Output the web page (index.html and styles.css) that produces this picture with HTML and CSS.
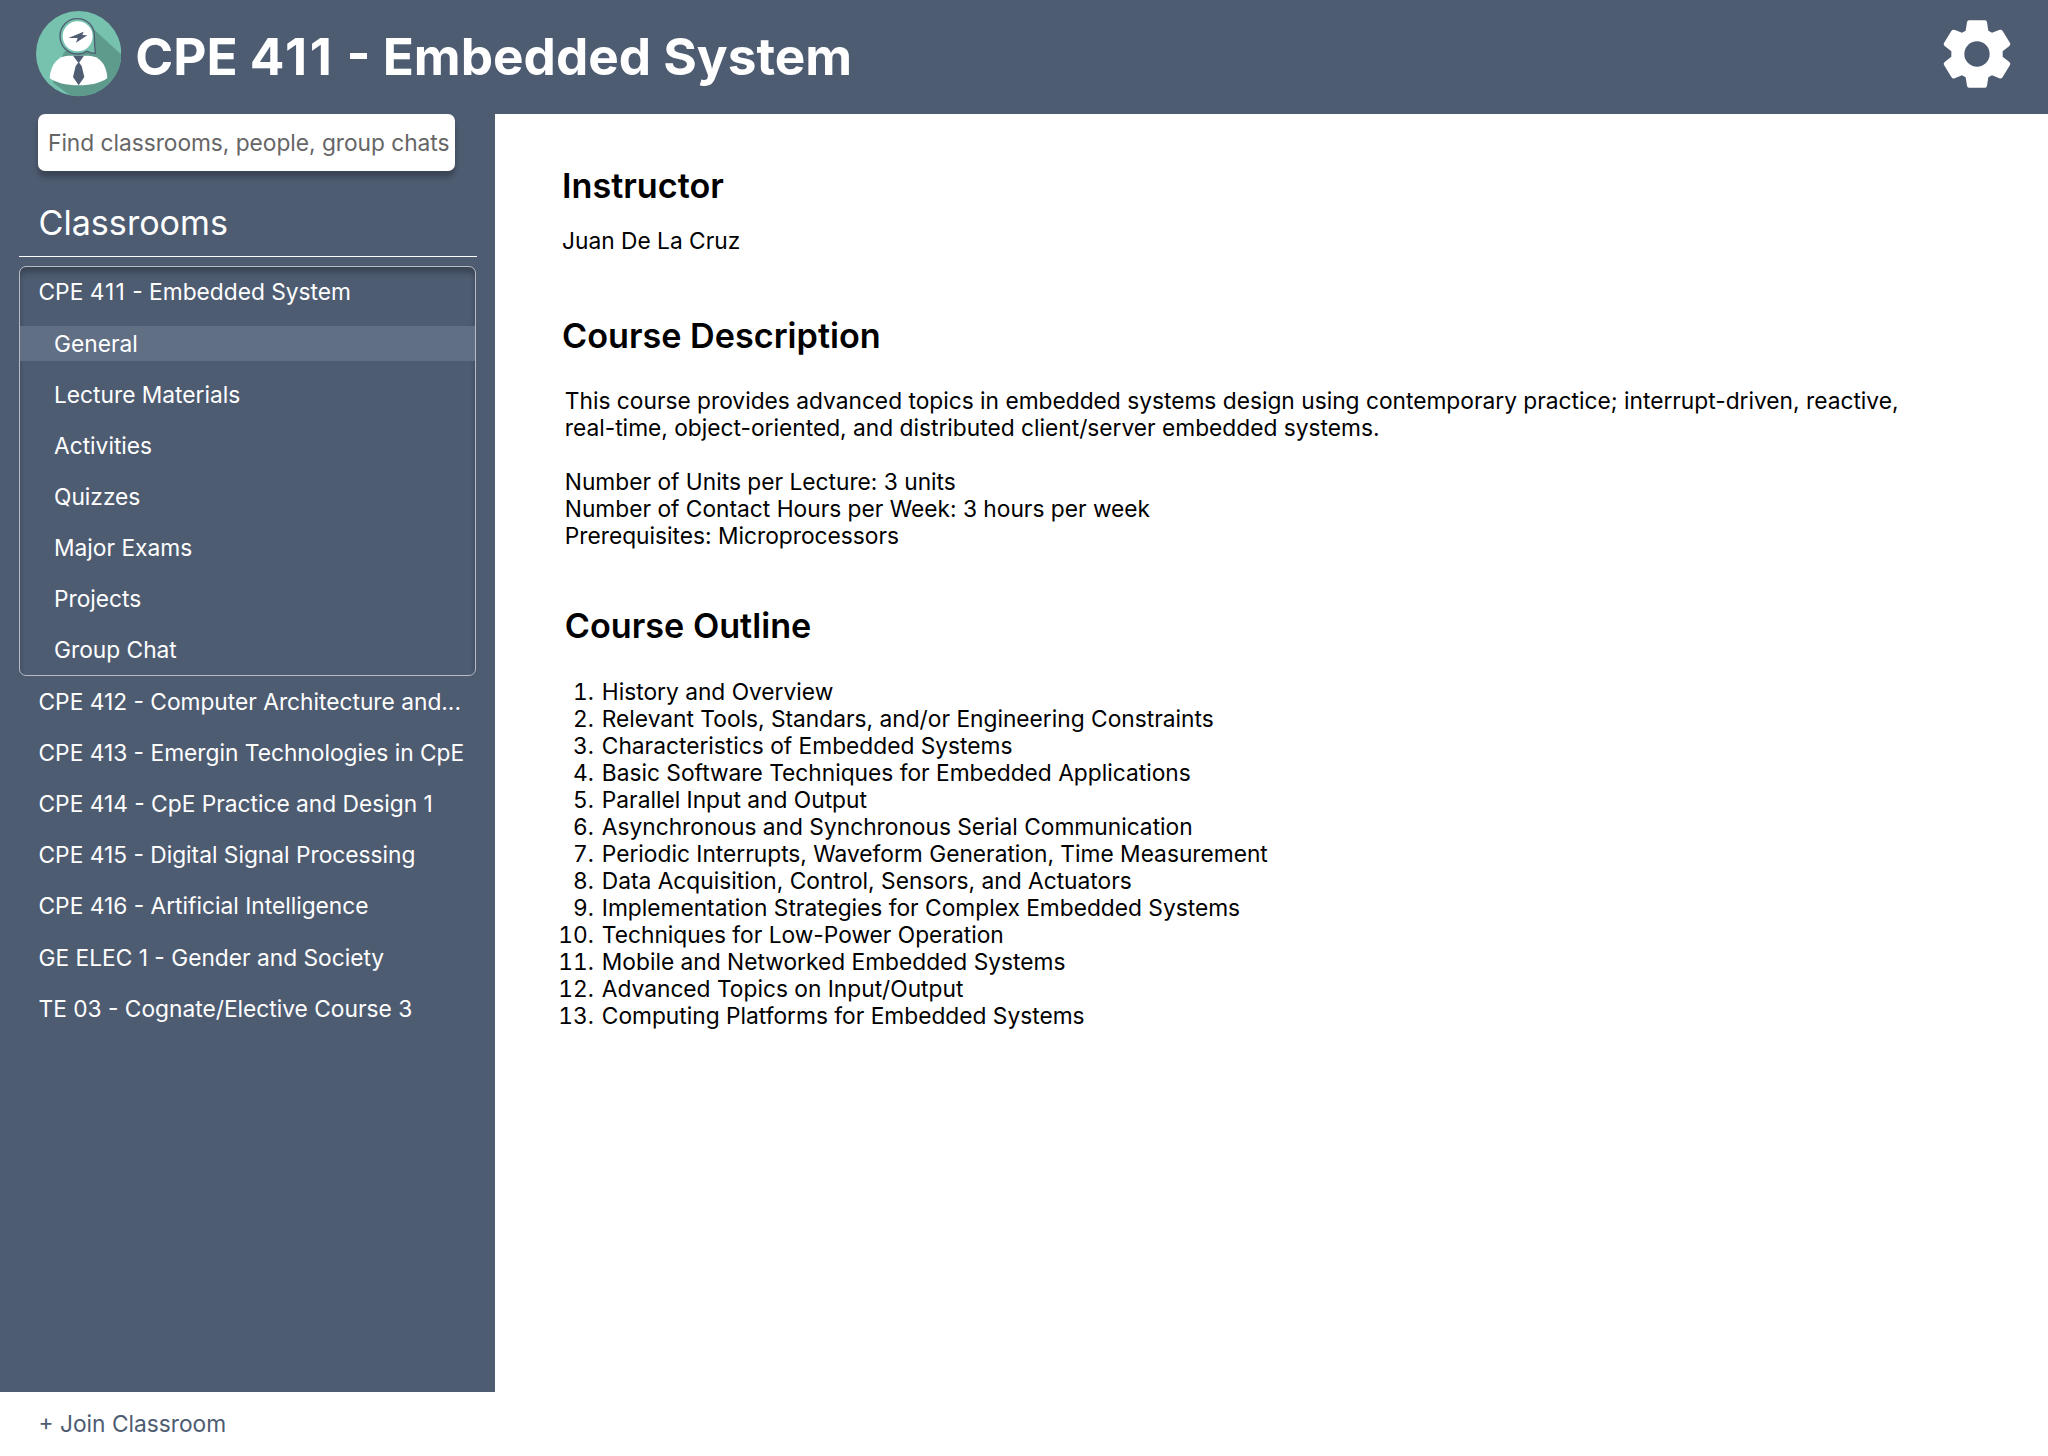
FILE: index.html
```html
<!DOCTYPE html>
<html lang="en">
<head>
<meta charset="utf-8">
<title>CPE 411 - Embedded System</title>
<link rel="stylesheet" href="styles.css">
</head>
<body>
<header class="topbar">
  <svg class="avatar" viewBox="47 34 256 256" aria-hidden="true">
    <defs><clipPath id="disc"><circle cx="175" cy="162" r="128"/></clipPath></defs>
    <g clip-path="url(#disc)">
      <rect x="47" y="34" width="256" height="256" fill="#76c2af"/>
      <path d="M207 77L320 180V300H166L98 249L130 160Z" fill="#5e9b8c"/>
      <path d="M171 57C200 57 222 79 222 109C222 121 224 148 225 161C217 161 207 158 200 155C191 161 182 163 171 163C142 163 119 139 119 110C119 80 142 57 171 57Z" fill="#76c2af" stroke="#4f5d73" stroke-width="4"/>
      <circle cx="172" cy="110" r="45" fill="#fff"/>
      <path d="M144 115L190 96L186 106L201 107L167 129L172 115Z" fill="#4f5d73"/>
      <path d="M88 235C91 193 114 168 144 168H205C236 168 259 193 261 235C244 249 213 257 175 257C137 257 106 249 88 235Z" fill="#fff"/>
      <path d="M158 168H191L175 191Z M175 187L184 199L192 232L175 257L158 232L166 199Z" fill="#4f5d73"/>
    </g>
  </svg>
  <h1 class="title">CPE <span class="ones">411</span> - Embedded System</h1>
  <svg class="gear" viewBox="68 60 204 204" aria-label="Settings">
    <path fill="#fff" fill-rule="evenodd" d="M146 61H194Q199 61 200 67L204 92L215 98L236 90Q243 87 247 93L269 129Q272 134 267 138L247 154V170L267 186Q272 190 269 195L247 231Q243 237 237 235L215 226L204 232L200 257Q199 263 194 263H146Q141 263 140 257L136 232L125 226L103 235Q97 237 93 231L71 195Q68 190 73 186L93 170V154L73 138Q68 134 71 129L93 93Q97 87 104 90L125 98L136 92L140 67Q141 61 146 61ZM170 124A38 38 0 1 0 170 200A38 38 0 1 0 170 124Z"/>
  </svg>
</header>
<div class="layout">
  <aside class="side">
    <nav class="panel">
      <input class="search" type="text" placeholder="Find classrooms, people, group chats" aria-label="Search">
      <h2 class="side-title">Classrooms</h2>
      <div class="group">
        <a class="row"><span>CPE <span class="ones">411</span> - Embedded System</span></a>
        <a class="row sub"><span class="active">General</span></a>
        <a class="row sub">Lecture Materials</a>
        <a class="row sub">Activities</a>
        <a class="row sub">Quizzes</a>
        <a class="row sub">Major Exams</a>
        <a class="row sub">Projects</a>
        <a class="row sub">Group Chat</a>
      </div>
      <div class="rooms">
        <a class="row">CPE 412 - Computer Architecture and...</a>
        <a class="row">CPE 413 - Emergin Technologies in CpE</a>
        <a class="row">CPE 414 - CpE Practice and Design 1</a>
        <a class="row">CPE 415 - Digital Signal Processing</a>
        <a class="row">CPE 416 - Artificial Intelligence</a>
        <a class="row">GE ELEC 1 - Gender and Society</a>
        <a class="row">TE 03 - Cognate/Elective Course 3</a>
      </div>
    </nav>
    <a class="join">+ Join Classroom</a>
  </aside>
  <main class="content">
    <section class="instructor">
      <h2>Instructor</h2>
      <p>Juan De La Cruz</p>
    </section>
    <section class="description">
      <h2>Course Description</h2>
      <div class="inset">
        <p>This course provides advanced topics in embedded systems design using contemporary practice; interrupt-driven, reactive,<br>real-time, object-oriented, and distributed client/server embedded systems.</p>
        <p>Number of Units per Lecture: 3 units<br>Number of Contact Hours per Week: 3 hours per week<br>Prerequisites: Microprocessors</p>
      </div>
    </section>
    <section class="outline inset">
      <h2>Course Outline</h2>
      <ol>
        <li>History and Overview</li>
        <li>Relevant Tools, Standars, and/or Engineering Constraints</li>
        <li>Characteristics of Embedded Systems</li>
        <li>Basic Software Techniques for Embedded Applications</li>
        <li>Parallel Input and Output</li>
        <li>Asynchronous and Synchronous Serial Communication</li>
        <li>Periodic Interrupts, Waveform Generation, Time Measurement</li>
        <li>Data Acquisition, Control, Sensors, and Actuators</li>
        <li>Implementation Strategies for Complex Embedded Systems</li>
        <li>Techniques for Low-Power Operation</li>
        <li>Mobile and Networked Embedded Systems</li>
        <li>Advanced Topics on Input/Output</li>
        <li>Computing Platforms for Embedded Systems</li>
      </ol>
    </section>
  </main>
</div>
</body>
</html>
```
FILE: styles.css
```css
* { box-sizing: border-box; margin: 0; padding: 0; }
body {
  width: 2048px;
  height: 1456px;
  display: flex;
  flex-direction: column;
  background: #fff;
  color: #000;
  font: 400 22.74px/27px Inter, "Liberation Sans", sans-serif;
  overflow: hidden;
}
.topbar {
  height: 113.8px;
  flex: none;
  display: flex;
  align-items: flex-start;
  background: #4e5c72;
  color: #fff;
}
.avatar { width: 85.33px; height: 85.33px; margin: 11.4px 0 0 35.6px; }
.title {
  margin: 25.4px auto 0 14.3px;
  font-size: 51.3px;
  line-height: 62px;
  font-weight: 700;
  white-space: nowrap;
}
.ones { letter-spacing: .05em; }
.gear { width: 68px; height: 68px; margin: 20px 37.3px 0 0; }
.layout { flex: 1; display: flex; min-height: 0; }
.side { width: 495px; flex: none; display: flex; flex-direction: column; }
.panel { flex: 1; background: #4e5c72; color: #fff; padding: 0 18.5px; }
.search {
  display: block;
  width: 417px;
  height: 57px;
  margin-left: 19.5px;
  padding: 0 0 0 10px;
  border: 0;
  border-radius: 7px;
  background: #fff;
  box-shadow: 0 5.7px 5.7px rgba(0, 0, 0, .25);
  font: inherit;
  letter-spacing: -.03px;
}
.search::placeholder { color: #666; opacity: 1; }
.side-title {
  margin-top: 31px;
  height: 55.5px;
  padding-left: 20px;
  border-bottom: 1.42px solid #fff;
  font-size: 34.13px;
  line-height: 41px;
  font-weight: 400;
}
.group {
  width: 457.5px;
  margin-top: 8.8px;
  border: 1px solid #b5bac4;
  border-radius: 7px;
  box-shadow: inset 0 5.7px 5.7px rgba(0, 0, 0, .25);
}
.row {
  display: flex;
  align-items: center;
  height: 51.2px;
  padding-left: 20px;
  white-space: nowrap;
}
.group .row { padding-left: 19px; }
.group .row:first-child, .group .row:last-child { height: 50.2px; }
.group .row:first-child { padding-bottom: 1.4px; }
.group .sub { padding-left: 0; }
.group .sub:not(:has(.active)) { padding-left: 34.5px; }
.active {
  width: 100%;
  margin-top: 1px;
  padding: 4px 0 4px 34.5px;
  background: #616f85;
}
.join { height: 64px; flex: none; padding: 18px 0 0 38.5px; color: #4e5c72; }
.content { flex: 1; padding: 51px 0 0 67px; }
.content h2 { font-size: 34.2px; line-height: 41px; font-weight: 600; }
.instructor p { margin-top: 21.4px; }
.description { margin-top: 60.6px; }
.inset { margin-left: 2.8px; }
.description .inset { margin-top: 30.9px; }
.description p + p { margin-top: 27px; }
.outline { margin-top: 56.6px; }
.outline ol { margin-top: 32px; list-style: none; counter-reset: topic; }
.outline li { counter-increment: topic; display: flex; gap: 8px; margin-left: -8px; white-space: nowrap; }
.outline li::before {
  content: counter(topic) ".";
  width: 37px;
  text-align: right;
  font-variant-numeric: tabular-nums;
}
```
